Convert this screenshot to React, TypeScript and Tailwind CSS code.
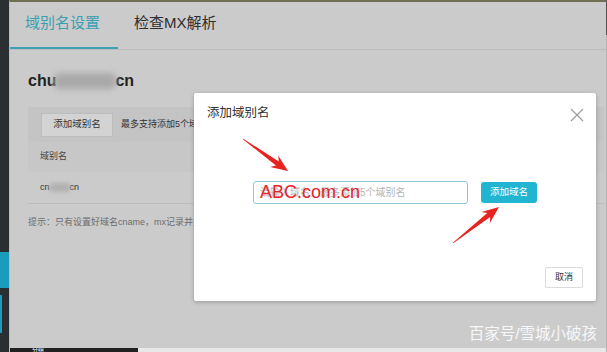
import React from "react";

function arrowPoints(tx: number, ty: number, px: number, py: number) {
  const dx = px - tx;
  const dy = py - ty;
  const L = Math.hypot(dx, dy);
  const ux = dx / L;
  const uy = dy / L;
  const nx = -uy;
  const ny = ux;
  const h = 13;
  const neck = 2.4;
  const wing = 7;
  const back = h + 4;
  const pts: [number, number][] = [
    [tx + nx * 0.4, ty + ny * 0.4],
    [px - ux * h + nx * neck, py - uy * h + ny * neck],
    [px - ux * back + nx * wing, py - uy * back + ny * wing],
    [px, py],
    [px - ux * back - nx * wing, py - uy * back - ny * wing],
    [px - ux * h - nx * neck, py - uy * h - ny * neck],
    [tx - nx * 0.4, ty - ny * 0.4],
  ];
  return pts.map((p) => p.map((v) => v.toFixed(1)).join(",")).join(" ");
}

export default function App() {
  const font = { fontFamily: '"Liberation Sans", "Noto Sans CJK SC", sans-serif' };
  return (
    <div
      className="relative w-[607px] h-[352px] overflow-hidden flex bg-[#cbcbcb]"
      style={font}
    >
      {/* left sidebar */}
      <div className="w-[9px] h-full bg-[#2a2f31] flex flex-col">
        <div className="mt-[252px] h-[36px] w-[9px] bg-[#1b9cbd]" />
        <div className="mt-[7px] h-[38px] w-[2px] bg-[#1b9cbd]" />
      </div>

      {/* main */}
      <div className="flex-1 h-full flex flex-col border-t-2 border-[#6f6f55] border-l border-l-[#bdbdbd]">
        {/* tabs */}
        <div className="h-[48px] flex border-b border-[#bcbcbc] shrink-0">
          <div className="w-[108px] pl-[15px] pt-[12px] text-[15px] leading-[18px] text-[#3a9fb2] border-b-2 border-[#3ba2b3]">
            域别名设置
          </div>
          <div className="ml-[16px] pt-[12px] text-[15px] leading-[18px] text-[#2e2e2e]">
            检查MX解析
          </div>
        </div>

        {/* content */}
        <div className="pl-[18px] pr-[2px] flex flex-col">
          <div className="mt-[21px] flex items-center h-[20px] text-[16px] font-bold text-[#222]">
            <span>chu</span>
            <span className="-ml-[3px] w-[64px] h-[16px] rounded-full bg-[#a9a9a9] blur-[3px]" />
            <span className="-ml-[2px]">cn</span>
          </div>

          <div className="mt-[16px] h-[35px] bg-[#c4c4c4] flex items-center pl-[13px]">
            <div className="w-[72px] h-[24px] bg-[#d3d3d3] border border-[#bdbdbd] flex items-center justify-center text-[9.5px] text-[#333]">
              添加域别名
            </div>
            <span className="ml-[8px] text-[9px] text-[#333] whitespace-nowrap">
              最多支持添加5个域别名
            </span>
          </div>
          <div className="h-[30px] bg-[#c7c7c7] flex items-center pl-[12px] text-[9px] text-[#444]">
            域别名
          </div>
          <div className="h-[32px] border-b border-[#bdbdbd] flex items-center pl-[12px] text-[9px] text-[#333]">
            <span>cn</span>
            <span className="-ml-[1px] w-[22px] h-[9px] rounded-full bg-[#b0b0b0] blur-[2px]" />
            <span className="-ml-[1px]">cn</span>
          </div>
          <div className="mt-[11px] text-[9px] leading-[14px] text-[#6d6d6d] whitespace-nowrap">
            提示：只有设置好域名cname，mx记录并生效后，域别名才能正常使用。
          </div>
        </div>

        <div className="mt-auto h-[4px] flex shrink-0">
          <div className="w-[128px] bg-[#222] text-[6px] leading-[4px] text-white pl-[22px] overflow-hidden">
            分组
          </div>
          <div className="flex-1 bg-[#e8e8e8]" />
        </div>
      </div>

      {/* right edge */}
      <div className="w-[1px] h-full flex flex-col">
        <div className="h-[35px] bg-[#555]" />
        <div className="flex-1 bg-[#b3b3b3]" />
      </div>

      {/* modal */}
      <div className="absolute left-[194px] top-[93px] w-[402px] h-[208px] bg-white rounded-[2px] shadow-[0_1px_4px_rgba(0,0,0,0.25)] flex flex-col">
        <div className="flex items-start justify-between pl-[13px] pr-[12px] pt-[10px]">
          <span className="text-[12.5px] leading-[20px] text-[#333]">添加域别名</span>
          <svg width="14" height="14" viewBox="0 0 14 14" className="mt-[5px]">
            <path d="M1 1 L13 13 M13 1 L1 13" stroke="#9a9a9a" strokeWidth="1.1" />
          </svg>
        </div>

        <div className="mt-[58px] flex items-center pl-[59px]">
          <div className="w-[215px] h-[23px] border border-[#86ccd8] rounded-[3px] flex items-center pl-[6px] text-[10px] text-[#b5b5b5] whitespace-nowrap overflow-hidden">
            请输入域名，最多添加5个域别名
          </div>
          <div className="ml-[13px] w-[56px] h-[21px] bg-[#22b5d2] rounded-[3px] flex items-center justify-center text-[9.5px] text-white">
            添加域名
          </div>
        </div>

        <div className="mt-auto flex justify-end pr-[13px] pb-[13px]">
          <div className="w-[38px] h-[21px] border border-[#dcdcdc] rounded-[2px] flex items-center justify-center text-[9px] text-[#333]">
            取消
          </div>
        </div>
      </div>

      {/* red annotation text */}
      <div className="absolute left-[260px] top-[181px] text-[18px] leading-[22px] text-[#e4262b] whitespace-nowrap">
        ABC.com.cn
      </div>

      {/* arrows */}
      <svg
        className="absolute left-0 top-0 pointer-events-none"
        width="607"
        height="352"
        viewBox="0 0 607 352"
      >
        <polygon points={arrowPoints(243, 139, 288, 171)} fill="#e8231f" />
        <polygon points={arrowPoints(453, 243, 499, 207)} fill="#e8231f" />
      </svg>

      {/* watermark */}
      <div className="absolute right-[10px] bottom-[8px] text-[15.5px] leading-[20px] text-white/85 whitespace-nowrap">
        百家号/雪城小破孩
      </div>
    </div>
  );
}
